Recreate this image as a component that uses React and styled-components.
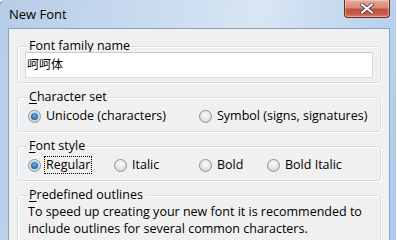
import React from "react";
import styled, { createGlobalStyle } from "styled-components";

const GlobalStyle = createGlobalStyle`
  html, body { margin: 0; padding: 0; background: #ffffff; }
  body { font-family: "Open Sans", "Noto Sans", "Noto Sans CJK SC", sans-serif; }
`;

const Window = styled.div`
  width: 397px;
  height: 240px;
  overflow: hidden;
  box-sizing: border-box;
  display: flex;
  flex-direction: column;
  padding: 0 6px 0 8px;
  border-left: 1px solid #5d7896;
  border-top-left-radius: 6px;
  background: linear-gradient(100deg, #b7cde6 0%, #c9dbef 35%, #d9e6f4 60%, #c3d7ee 80%, #aecbed 100%);
  margin-left: -1px;
`;

const TitleBar = styled.div`
  height: 28px;
  display: flex;
  justify-content: space-between;
  align-items: flex-start;
  flex: none;
`;

const Title = styled.div`
  font-family: "Open Sans", sans-serif;
  font-size: 13px;
  line-height: 16px;
  color: #000;
  margin-top: 6px;
  margin-left: 1px;
`;

const CloseButton = styled.div`
  width: 46px;
  height: 18px;
  box-sizing: border-box;
  border: 1px solid #6e2b22;
  border-top: none;
  border-radius: 0 0 4px 4px;
  background: linear-gradient(180deg, #e9a99a 0%, #d88a7b 45%, #c4503e 55%, #c85a45 80%, #d7826a 100%);
  display: flex;
  align-items: center;
  justify-content: center;
  box-shadow: inset 0 0 0 1px rgba(255, 220, 210, 0.45);
`;

const Client = styled.div`
  flex: 1;
  background: #f0f0f0;
  border: 1px solid #8ba2bd;
  border-bottom: none;
  padding: 0 8px;
  display: flex;
  flex-direction: column;
  box-sizing: border-box;
`;

const Group = styled.div`
  border: 1px solid #d5dfe5;
  border-radius: 3px;
  box-shadow: inset 1px 1px 0 #ffffff, 1px 1px 0 #ffffff;
  margin-top: ${(p) => p.$top}px;
  padding: 0 0 ${(p) => p.$bottom}px 0;
  display: flex;
  flex-direction: column;
  align-items: flex-start;
`;

const Legend = styled.div`
  font-size: 12.5px;
  line-height: 16px;
  height: 16px;
  margin: -9px 0 0 9px;
  padding: 0 2px;
  background: #f0f0f0;
  color: #000;
  white-space: nowrap;
`;

const Key = styled.span`
  text-decoration: underline;
  text-underline-offset: 2px;
`;

const TextBox = styled.div`
  align-self: stretch;
  margin: -2px 7px 0 7px;
  height: 26px;
  box-sizing: border-box;
  background: #ffffff;
  border: 1px solid #dadcde;
  border-top-color: #c5c8cc;
  font-family: "Noto Sans CJK SC", sans-serif;
  font-size: 12px;
  line-height: 22px;
  padding-left: 1px;
  color: #000;
`;

const Row = styled.div`
  display: flex;
  margin: 3px 0 0 10px;
  height: 16px;
  align-items: center;
`;

const Option = styled.div`
  width: ${(p) => (p.$w ? `${p.$w}px` : "auto")};
  display: flex;
  align-items: center;
  font-size: 12.5px;
  line-height: 16px;
  color: #000;
  white-space: nowrap;
`;

const RadioCircle = styled.span`
  width: 13px;
  height: 13px;
  box-sizing: border-box;
  border-radius: 50%;
  border: 1px solid #929292;
  background: radial-gradient(circle at 50% 35%, #fbfbfb 0%, #e6e6e6 50%, #c8c8c8 100%);
  display: flex;
  align-items: center;
  justify-content: center;
  flex: none;
  margin-right: 4px;
  &::after {
    content: "";
    width: 7px;
    height: 7px;
    border-radius: 50%;
    display: ${(p) => (p.$checked ? "block" : "none")};
    background: radial-gradient(circle at 50% 40%, #6cb6ea 0%, #2d72b3 55%, #1c4a7c 100%);
    box-shadow: 0 0 0 1px #b9d3ec;
  }
`;

const OptionLabel = styled.span`
  padding: 0 1px;
  outline: ${(p) => (p.$focus ? "1px dotted #000" : "none")};
  outline-offset: 0px;
  line-height: 16px;
`;

const Paragraph = styled.div`
  font-size: 12.5px;
  line-height: 17px;
  color: #000;
  margin: 0 0 0 10px;
  white-space: nowrap;
`;

function Radio({ label, checked, focus, w }) {
  return (
    <Option $w={w}>
      <RadioCircle $checked={checked} />
      <OptionLabel $focus={focus}>{label}</OptionLabel>
    </Option>
  );
}

export default function App() {
  return (
    <>
      <GlobalStyle />
      <Window>
        <TitleBar>
          <Title>New Font</Title>
          <CloseButton>
            <svg width="14" height="11" viewBox="0 0 14 11">
              <path
                d="M2 1.5 L12 9.5 M12 1.5 L2 9.5"
                stroke="#4a3a38"
                strokeWidth="3.6"
                strokeLinecap="square"
              />
              <path
                d="M2 1.5 L12 9.5 M12 1.5 L2 9.5"
                stroke="#ffffff"
                strokeWidth="2"
                strokeLinecap="square"
              />
            </svg>
          </CloseButton>
        </TitleBar>
        <Client>
          <Group $top={17} $bottom={4}>
            <Legend>
              Font family <Key>n</Key>ame
            </Legend>
            <TextBox>呵呵体</TextBox>
          </Group>
          <Group $top={14} $bottom={7}>
            <Legend>
              <Key>C</Key>haracter set
            </Legend>
            <Row>
              <Radio w={171} label="Unicode (characters)" checked />
              <Radio label="Symbol (signs, signatures)" />
            </Row>
          </Group>
          <Group $top={14} $bottom={7}>
            <Legend>
              <Key>F</Key>ont style
            </Legend>
            <Row>
              <Radio w={86} label="Regular" checked focus />
              <Radio w={85} label="Italic" />
              <Radio w={68} label="Bold" />
              <Radio label="Bold Italic" />
            </Row>
          </Group>
          <Group $top={14} $bottom={7}>
            <Legend>
              <Key>P</Key>redefined outlines
            </Legend>
            <Paragraph>
              To speed up creating your new font it is recommended to
              <br />
              include outlines for several common characters.
            </Paragraph>
          </Group>
        </Client>
      </Window>
    </>
  );
}
